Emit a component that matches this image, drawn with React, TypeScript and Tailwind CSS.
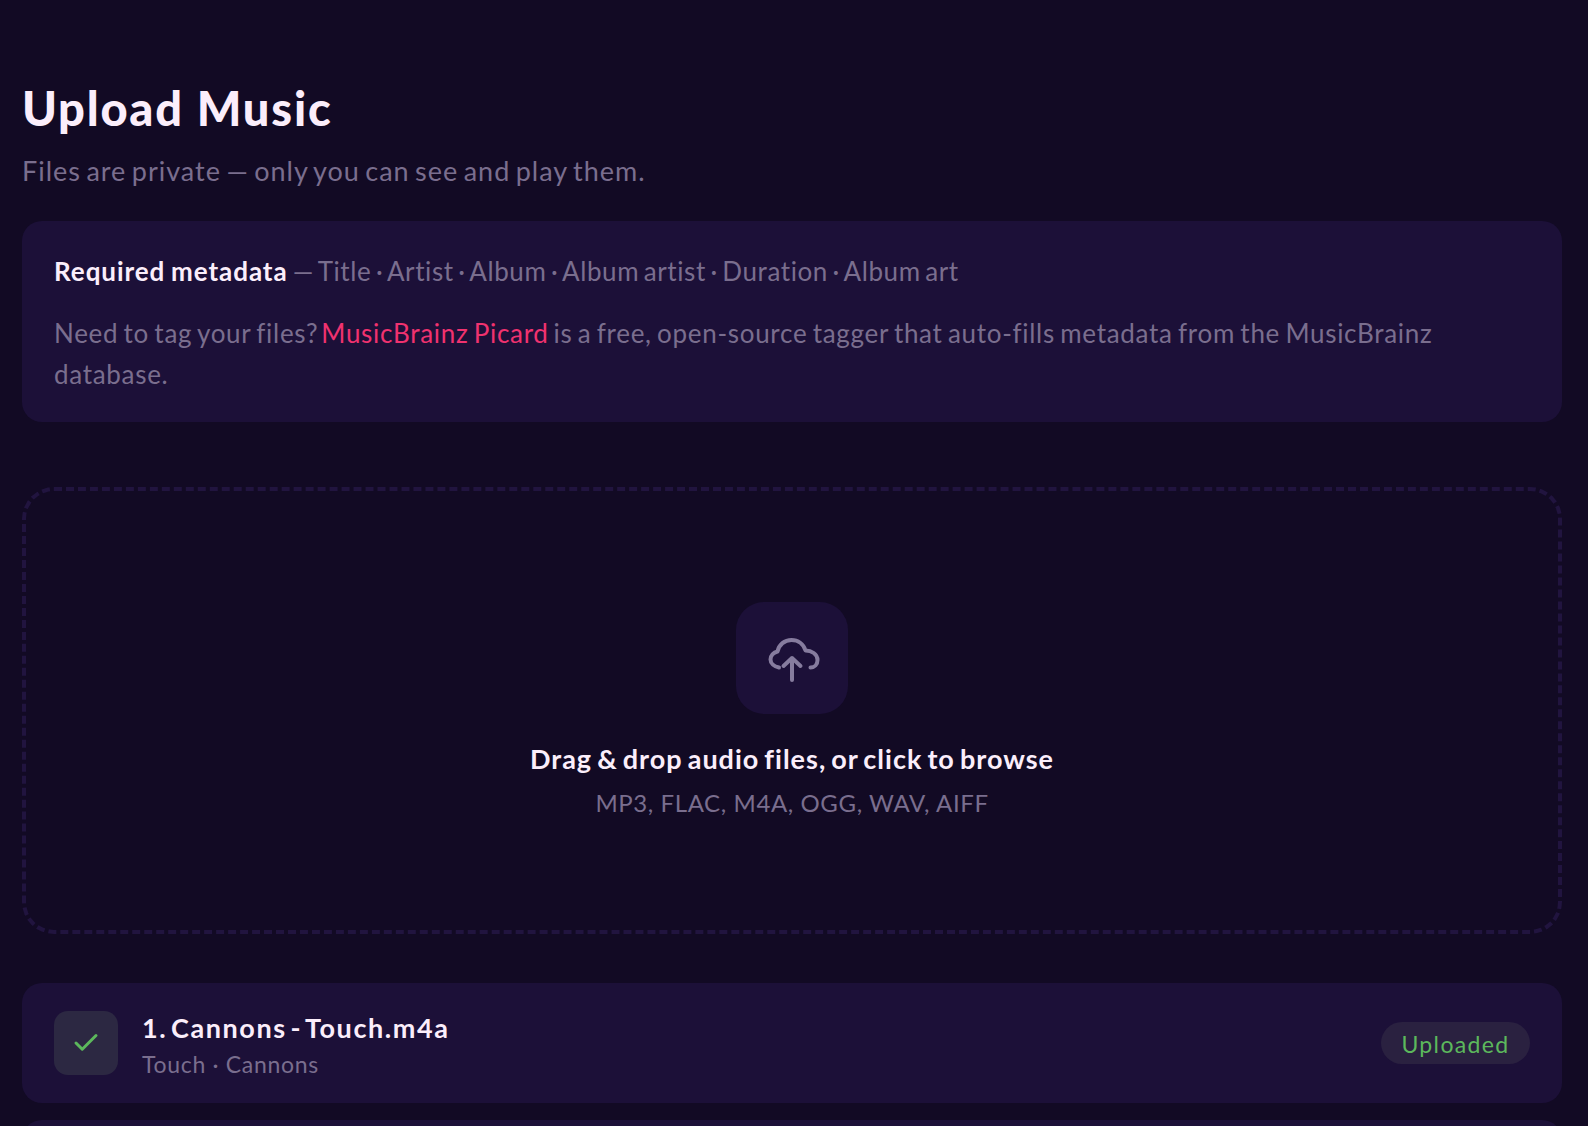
import { Check } from "lucide-react";

const font = "font-['Lato','Noto_Sans',sans-serif]";

function CloudIcon() {
	return (
		<svg viewBox="-6 0 56 56" className="w-14 h-14 text-[#aaa0c0]" fill="none" stroke="currentColor" strokeWidth={4} strokeLinecap="round" strokeLinejoin="round" strokeOpacity={0.75}>
			<path d="M9 37.5C4 36.5 0.5 33.5 0.5 29.5C0.5 25.5 3.5 22.5 7.5 21.5C9 14.5 14.5 10 21.5 10C28 10 33.5 14 35.5 20.5C41.5 20.5 47.5 24 47.5 30C47.5 34.5 44.5 37.5 40.5 37.5" />
			<path d="M22 50V28M13.5 36L22 28L30.5 36" />
		</svg>
	);
}

function TrackRow({ name, meta }: { name: string; meta: string }) {
	return (
		<div className="flex items-center gap-6 h-[120px] px-8 rounded-[20px] bg-[#1c1038]">
			<div className="flex items-center justify-center w-16 h-16 rounded-[14px] bg-[#2c2842]">
				<Check className="w-[30px] h-[30px] text-[#5cb85c]" strokeWidth={2.4} />
			</div>
			<div className="flex-1 pt-1">
				<div className="text-[27px] leading-[36px] font-bold text-[#fbeefb] tracking-[1.6px] [word-spacing:-4.5px]">{name}</div>
				<div className="mt-[2px] text-[23px] leading-[32px] text-[#7a6e8e] tracking-[0.7px]">{meta}</div>
			</div>
			<div className="flex items-center justify-center w-[149px] h-[42px] pt-[2px] rounded-full bg-[#2a2140] text-[23px] text-[#5cb85c] tracking-[1.35px]">
				Uploaded
			</div>
		</div>
	);
}

export default function App() {
	return (
		<div className={`${font} h-[1126px] overflow-hidden bg-[#120a24] pl-[22px] pr-[26px] pt-[80px]`}>
			<h1 className="text-[47px] leading-[56px] font-black text-[#fbeefb] tracking-[1.8px]">Upload Music</h1>
			<p className="mt-[17px] text-[27px] leading-[36px] text-[#7a6e8e] tracking-[1px] [word-spacing:-2.5px]">
				Files are private — only you can see and play them.
			</p>

			<div className="mt-8 h-[201px] px-8 pt-[30px] rounded-[20px] bg-[#1c1038]">
				<p className="text-[26px] leading-[40px] text-[#7a6e8e] tracking-[0.6px] [word-spacing:-2.7px]">
					<span className="mr-[5px] font-bold text-[#fbeefb] tracking-[0.95px] [word-spacing:-1.6px]">Required metadata</span>— Title · Artist · Album · Album artist · Duration · Album art
				</p>
				<p className="mt-[22px] text-[26px] leading-[41px] text-[#7a6e8e] tracking-[0.7px] [word-spacing:-2px]">
					Need to tag your files?<span className="ml-[3px] mr-[5px] text-[#f0326f]">MusicBrainz Picard</span>is a free, open-source tagger that auto-fills metadata from the MusicBrainz<br />database.
				</p>
			</div>

			<div className="flex flex-col items-center mt-[65px] h-[447px] pt-[111px] rounded-[32px] border-4 border-dashed border-[#21143f]">
				<div className="flex items-center justify-center w-28 h-28 rounded-[28px] bg-[#1c1038]">
					<CloudIcon />
				</div>
				<div className="mt-[25px] text-[27px] leading-[40px] font-bold text-[#fbeefb] tracking-[1px] [word-spacing:-2.5px]">
					Drag &amp; drop audio files, or click to browse
				</div>
				<div className="mt-[6px] text-[24px] leading-[36px] text-[#7a6e8e] tracking-[0.6px]">
					MP3, FLAC, M4A, OGG, WAV, AIFF
				</div>
			</div>

			<div className="flex flex-col gap-[17px] mt-[49px]">
				<TrackRow name="1. Cannons - Touch.m4a" meta="Touch · Cannons" />
				{/* next row is cut off by the window, only its top shows */}
				<div className="h-[120px] rounded-[20px] bg-[#1c1038]" />
			</div>
		</div>
	);
}
